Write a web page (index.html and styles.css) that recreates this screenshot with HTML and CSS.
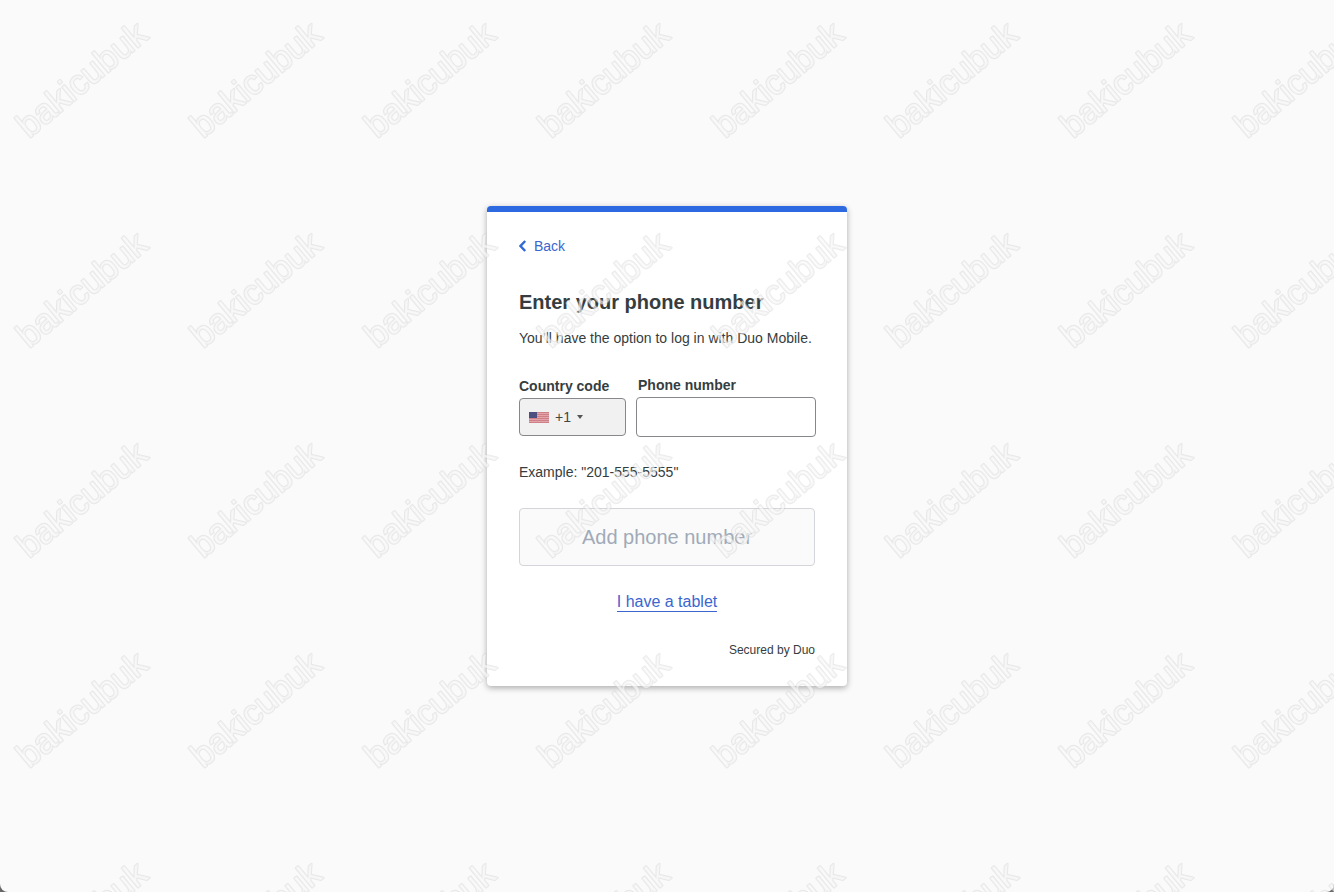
FILE: index.html
```html
<!DOCTYPE html>
<html lang="en">
<head>
<meta charset="utf-8">
<meta name="viewport" content="width=device-width, initial-scale=1">
<title>Enter your phone number</title>
<link rel="stylesheet" href="styles.css">
</head>
<body>
<main class="page">
  <section class="card">
    <a class="back" href="#">
      <svg class="back-icon" viewBox="0 0 8 12" aria-hidden="true"><path d="M6.200 1 1.500 6l4.700 5"/></svg>
      Back
    </a>
    <h1 class="title">Enter your phone number</h1>
    <p class="intro">You’ll have the option to log in with Duo Mobile.</p>
    <form class="form">
      <div class="fields">
        <div class="field field-code">
          <label class="label" for="country">Country code</label>
          <div class="picker">
            <select class="select" id="country"><option>+1</option></select>
            <svg class="flag" viewBox="0 0 20 11" aria-hidden="true">
              <rect width="20" height="11" fill="#e3a3a8"/>
              <path d="M0 .5h20M0 2.500h20M0 4.500h20M0 6.500h20M0 8.500h20M0 10.500h20" stroke="#cd8088"/>
              <rect width="8" height="6" fill="#4d4f80"/>
            </svg>
            <svg class="caret" viewBox="0 0 6 4" aria-hidden="true"><path d="M0 0h6L3 4z"/></svg>
          </div>
        </div>
        <div class="field field-phone">
          <label class="label label-phone" for="phone">Phone number</label>
          <input class="input" id="phone" type="tel">
        </div>
      </div>
      <p class="example">Example: "201-555-5555"</p>
      <button class="submit" type="submit" disabled>Add phone number</button>
    </form>
    <a class="tablet" href="#">I have a tablet</a>
    <p class="secured">Secured by Duo</p>
  </section>
</main>
<svg class="watermark" aria-hidden="true">
  <defs>
    <pattern id="mark" width="174" height="210" patternUnits="userSpaceOnUse">
      <g transform="translate(29 139) rotate(-40)">
        <text class="mark-face" x="0" y="0">bakicubuk</text>
      </g>
    </pattern>
  </defs>
  <rect width="100%" height="100%" fill="url(#mark)"/>
</svg>
</body>
</html>
```
FILE: styles.css
```css
* { box-sizing: border-box; }
html { background: #666866; }
body {
  margin: 0;
  font-family: "Liberation Sans", Arial, sans-serif;
  font-size: 14px;
  line-height: 20px;
  color: #363d40;
}
.page {
  min-height: 100vh;
  display: flex;
  align-items: center;
  justify-content: center;
  background: #fafafa;
  border-radius: 0 0 8px 8px;
}
.card {
  width: 100%;
  max-width: 360px;
  display: flex;
  flex-direction: column;
  padding: 24px 32px 26px;
  background: #fff;
  border-top: 6px solid #2d69e0;
  border-radius: 4px;
  box-shadow: 0 2px 6px rgba(0, 0, 0, .32);
}
.back {
  display: flex;
  align-items: center;
  align-self: flex-start;
  gap: 7px;
  color: #3b66d0;
  text-decoration: none;
}
.back-icon { width: 8px; height: 12px; fill: none; stroke: #3069d4; stroke-width: 2.4; }
.title { margin: 34px 0 0; font-size: 20px; line-height: 24px; }
.intro { margin: 14px 0 0; }
.fields { display: flex; align-items: flex-end; gap: 10px; margin: 27px -1px 0 0; }
.field { display: flex; flex-direction: column; gap: 2px; }
.field-code { flex: 0 0 107px; padding-bottom: 1px; }
.field-phone { flex: 1; min-width: 0; }
.label { font-weight: bold; }
.label-phone { padding-left: 2px; }
.picker { display: grid; align-items: center; }
.picker > * { grid-area: 1 / 1; }
.select {
  width: 100%;
  height: 38px;
  padding: 0 0 0 35px;
  appearance: none;
  background: #f1f1f1;
  border: 1px solid #85878a;
  border-radius: 4px;
  font: inherit;
  color: #444;
}
.flag { width: 20px; height: 11px; margin-left: 10px; pointer-events: none; }
.caret { width: 6px; height: 4px; margin-left: 58px; fill: #555; pointer-events: none; }
.input {
  width: 100%;
  height: 40px;
  padding: 0 10px;
  background: #fff;
  border: 1px solid #85878a;
  border-radius: 4px;
  font: inherit;
}
.example { margin: 25px 0 0; }
.submit {
  width: 100%;
  height: 58px;
  margin-top: 26px;
  background: #fafafa;
  border: 1px solid #d3d5da;
  border-radius: 4px;
  font: inherit;
  font-size: 20px;
  color: #a0aab8;
}
.tablet {
  align-self: center;
  margin-top: 26px;
  font-size: 16px;
  color: #3b66d0;
  text-decoration: none;
  border-bottom: 1px solid #3b66d0;
  line-height: 19px;
}
.secured { margin: 28px 0 0; font-size: 12px; text-align: right; }
.watermark { position: fixed; inset: 0; width: 100%; height: 100%; pointer-events: none; }
.mark-face {
  font-size: 35px;
  fill: #fcfcfc;
  fill-opacity: .6;
  stroke: #c4c4c4;
  stroke-opacity: .35;
  stroke-width: 2;
  stroke-linejoin: round;
  paint-order: stroke;
}
```
